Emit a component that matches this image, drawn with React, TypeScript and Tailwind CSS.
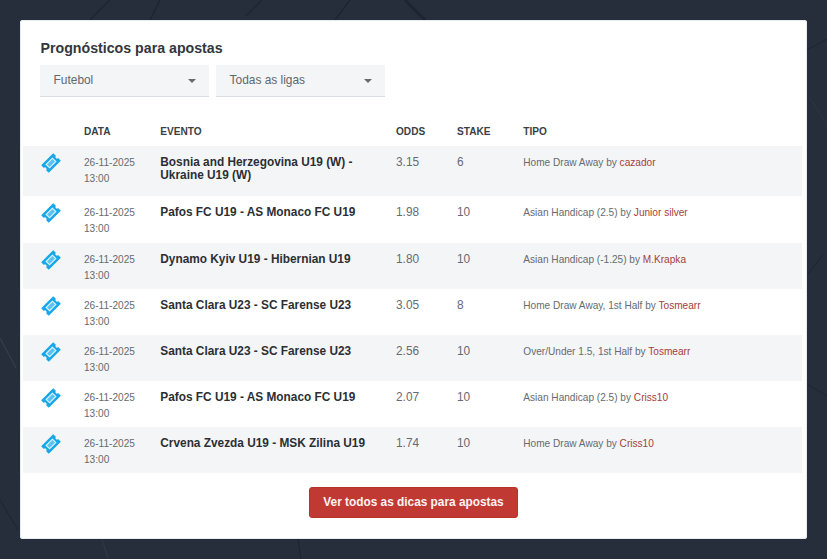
const rows = [
  { e: "Bosnia and Herzegovina U19 (W) - Ukraine U19 (W)", o: "3.15", s: "6", t: "Home Draw Away", u: "cazador", h: "h-[50px]" },
  { e: "Pafos FC U19 - AS Monaco FC U19", o: "1.98", s: "10", t: "Asian Handicap (2.5)", u: "Junior silver", h: "h-[47px]" },
  { e: "Dynamo Kyiv U19 - Hibernian U19", o: "1.80", s: "10", t: "Asian Handicap (-1.25)", u: "M.Krapka", h: "h-[46px]" },
  { e: "Santa Clara U23 - SC Farense U23", o: "3.05", s: "8", t: "Home Draw Away, 1st Half", u: "Tosmearr", h: "h-[46px]" },
  { e: "Santa Clara U23 - SC Farense U23", o: "2.56", s: "10", t: "Over/Under 1.5, 1st Half", u: "Tosmearr", h: "h-[46px]" },
  { e: "Pafos FC U19 - AS Monaco FC U19", o: "2.07", s: "10", t: "Asian Handicap (2.5)", u: "Criss10", h: "h-[46px]" },
  { e: "Crvena Zvezda U19 - MSK Zilina U19", o: "1.74", s: "10", t: "Home Draw Away", u: "Criss10", h: "h-[46px]" },
];

function Ticket() {
  return (
    <svg width="20" height="20" viewBox="0 0 20 20" className="block">
      <g transform="rotate(-45 10 10)">
        <path
          d="M1.5 4.6h17v3.8a1.6 1.6 0 0 0 0 3.2v3.8h-17v-3.8a1.6 1.6 0 0 0 0-3.2z"
          fill="#18a8ea"
        />
        <rect x="5.6" y="7.6" width="8.8" height="4.8" fill="#5cc3f1" stroke="#e6f6fd" strokeWidth="1.1" />
      </g>
    </svg>
  );
}

function Select({ label }: { label: string }) {
  return (
    <div className="w-[169px] h-[32px] bg-[#f4f5f7] border-b border-[#d9dce0] flex items-center justify-between pl-[13.6px] pr-[13px] text-[11.9px] text-[#62676d]">
      <span>{label}</span>
      <span className="w-0 h-0 border-l-[4.5px] border-r-[4.5px] border-t-[4.5px] border-l-transparent border-r-transparent border-t-[#666b71]" />
    </div>
  );
}

export default function App() {
  return (
    <div
      className="relative w-[827px] h-[559px] overflow-hidden bg-[#262e3c] p-[20px]"
      style={{ fontFamily: '"Liberation Sans", Arial, sans-serif' }}
    >
      <svg className="absolute inset-0" width="827" height="559" fill="none" stroke="#1e2531" strokeWidth="1.5">
        <path d="M110 0 L90 20" />
        <path d="M160 0 L150 20" />
        <path d="M262 0 L246 16" />
        <path d="M350 0 L335 20" />
        <path d="M405 0 L425 20" strokeWidth="3" />
        <path d="M0 338 L16 368" stroke="#39424f" strokeWidth="1" />
        <path d="M0 500 L18 530" strokeWidth="1" />
        <path d="M102 539 L108 559" stroke="#2f3a48" strokeWidth="1" />
        <path d="M298 539 L301 559" stroke="#1e2531" strokeWidth="1" />
        <path d="M807 50 L827 39" strokeWidth="1" />
        <path d="M810 98 L827 124" stroke="#2d3644" strokeWidth="1" />
        <path d="M807 275 L823 255" strokeWidth="1" />
        <path d="M807 384 L827 396" strokeWidth="1" />
      </svg>
      <div className="relative w-[787px] h-[519px] bg-white rounded-[3px] pt-[20px] flex flex-col shadow-[inset_0_0_0_1px_#e6ebf0]">
        <h2 className="pl-[20.5px] text-[14.2px] leading-[17px] font-bold text-[#33373c]">Prognósticos para apostas</h2>
        <div className="flex gap-[7px] pl-[20px] mt-[8px]">
          <Select label="Futebol" />
          <Select label="Todas as ligas" />
        </div>
        <div className="mx-[3px] mt-[23px] w-[779px]">
          <div className="flex items-center h-[26px] pb-[3px] text-[10.1px] font-bold text-[#3a3f45]">
            <span className="w-[61px]" />
            <span className="w-[76px]">DATA</span>
            <span className="w-[236px] pl-[0.3px]">EVENTO</span>
            <span className="w-[61px]">ODDS</span>
            <span className="w-[66px]">STAKE</span>
            <span className="pl-[0.3px]">TIPO</span>
          </div>
          {rows.map((r, i) => (
            <div key={i} className={`flex items-start pt-[8px] ${r.h} ${i % 2 === 0 ? "bg-[#f4f5f7]" : "bg-white"}`}>
              <span className="w-[61px] pl-[18px] -mt-[1px]"><Ticket /></span>
              <span className="w-[76px] pt-[1px] text-[10.1px] leading-[16px] text-[#666b71]">26-11-2025<br />13:00</span>
              <span className="w-[236px] pt-[2px] pl-[0.3px] pr-[20px] text-[11.85px] leading-[13px] font-bold text-[#2b2f34]">{r.e}</span>
              <span className="w-[61px] text-[11.85px] leading-[14px] pt-[1px] text-[#666b71]">{r.o}</span>
              <span className="w-[66px] text-[11.85px] leading-[14px] pt-[1px] text-[#666b71]">{r.s}</span>
              <span className="pt-[1px] pl-[0.3px] text-[10.1px] leading-[16px] text-[#666b71]">
                {r.t} by <a className="text-[#a5403b]">{r.u}</a>
              </span>
            </div>
          ))}
        </div>
        <div className="flex justify-center mt-[14px]">
          <button className="w-[209px] h-[31px] bg-[#c03a33] border border-[#b5342e] rounded-[3px] text-[#fdf3f2] text-[11.85px] font-bold">Ver todos as dicas para apostas</button>
        </div>
      </div>
    </div>
  );
}
